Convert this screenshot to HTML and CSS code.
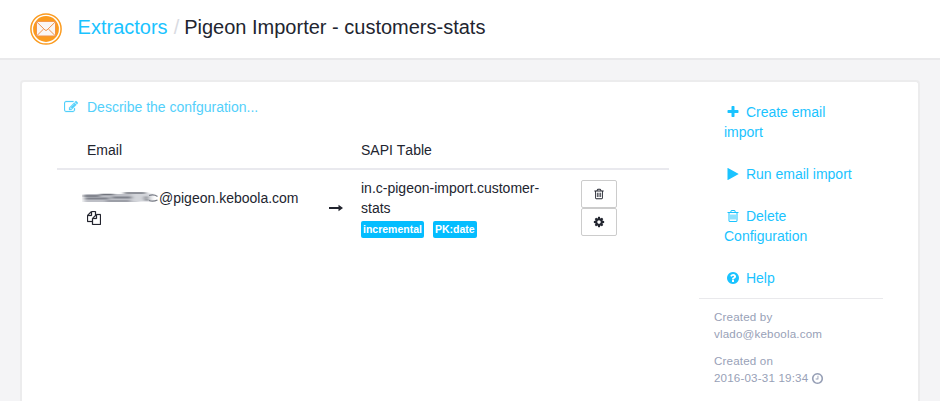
FILE: index.html
```html
<!DOCTYPE html>
<html lang="en">
<head>
<meta charset="utf-8">
<title>Pigeon Importer - customers-stats</title>
<link rel="stylesheet" href="styles.css">
</head>
<body>
<svg class="sprite" aria-hidden="true">
  <symbol id="edit" viewBox="0 0 1792 1792"><path d="M888 1184l116-116-152-152-116 116v56h96v96h56zm440-720q-16-16-33 1l-350 350q-17 17-1 33t33-1l350-350q17-17 1-33zm80 594v190q0 119-84.5 203.5t-203.5 84.5h-832q-119 0-203.5-84.5t-84.5-203.5v-832q0-119 84.5-203.5t203.5-84.5h832q63 0 117 25 15 7 18 23 3 17-9 29l-49 49q-14 14-32 8-23-6-45-6h-832q-66 0-113 47t-47 113v832q0 66 47 113t113 47h832q66 0 113-47t47-113v-126q0-13 9-22l64-64q15-15 35-7t20 29zm-96-738l288 288-672 672h-288v-288zm444 132l-92 92-288-288 92-92q28-28 68-28t68 28l152 152q28 28 28 68t-28 68z"/></symbol>
  <symbol id="copy" viewBox="0 0 1792 1792"><path d="M1696 384q40 0 68 28t28 68v1216q0 40-28 68t-68 28h-960q-40 0-68-28t-28-68v-288h-544q-40 0-68-28t-28-68v-672q0-40 20-88t48-76l408-408q28-28 76-48t88-20h416q40 0 68 28t28 68v328q68-40 128-40h416zm-544 213l-299 299h299v-299zm-640-384l-299 299h299v-299zm196 647l316-316v-416h-384v416q0 40-28 68t-68 28h-416v640h512v-256q0-40 20-88t48-76zm956 804v-1152h-384v416q0 40-28 68t-68 28h-416v640h896z"/></symbol>
  <symbol id="trash" viewBox="0 0 1792 1792"><path d="M704 736v576q0 14-9 23t-23 9h-64q-14 0-23-9t-9-23v-576q0-14 9-23t23-9h64q14 0 23 9t9 23zm256 0v576q0 14-9 23t-23 9h-64q-14 0-23-9t-9-23v-576q0-14 9-23t23-9h64q14 0 23 9t9 23zm256 0v576q0 14-9 23t-23 9h-64q-14 0-23-9t-9-23v-576q0-14 9-23t23-9h64q14 0 23 9t9 23zm128 724v-948h-896v948q0 22 7 40.5t14.5 27 10.5 8.5h832q3 0 10.5-8.5t14.5-27 7-40.5zm-672-1076h448l-48-117q-7-9-17-11h-317q-10 2-17 11zm928 32v64q0 14-9 23t-23 9h-96v948q0 83-47 143.5t-113 60.5h-832q-66 0-113-58.5t-47-141.5v-952h-96q-14 0-23-9t-9-23v-64q0-14 9-23t23-9h309l70-167q15-37 54-63t79-26h320q40 0 79 26t54 63l70 167h309q14 0 23 9t9 23z"/></symbol>
  <symbol id="cog" viewBox="0 0 1792 1792"><path d="M1152 896q0-106-75-181t-181-75-181 75-75 181 75 181 181 75 181-75 75-181zm512-109v222q0 12-8 23t-20 13l-185 28q-19 54-39 91 35 50 107 138 10 12 10 25t-9 23q-27 37-99 108t-94 71q-12 0-26-9l-138-108q-44 23-91 38-16 136-29 186-7 28-36 28h-222q-14 0-24.5-8.5t-11.5-21.5l-28-184q-49-16-90-37l-141 107q-10 9-25 9-14 0-25-11-126-114-165-168-7-10-7-23 0-12 8-23 15-21 51-66.5t54-70.5q-27-50-41-99l-183-27q-13-2-21-12.5t-8-23.5v-222q0-12 8-23t19-13l186-28q14-46 39-92-40-57-107-138-10-12-10-24 0-10 9-23 26-36 98.5-107.5t94.5-71.5q13 0 26 10l138 107q44-23 91-38 16-136 29-186 7-28 36-28h222q14 0 24.5 8.5t11.5 21.5l28 184q49 16 90 37l142-107q9-9 24-9 13 0 25 10 129 119 165 170 7 8 7 22 0 12-8 23-15 21-51 66.5t-54 70.5q26 50 41 98l183 28q13 2 21 12.5t8 23.5z"/></symbol>
  <symbol id="plus" viewBox="0 0 1792 1792"><path d="M1600 736v192q0 40-28 68t-68 28h-416v416q0 40-28 68t-68 28h-192q-40 0-68-28t-28-68v-416h-416q-40 0-68-28t-28-68v-192q0-40 28-68t68-28h416v-416q0-40 28-68t68-28h192q40 0 68 28t28 68v416h416q40 0 68 28t28 68z"/></symbol>
  <symbol id="play" viewBox="0 0 1792 1792"><path d="M1576 927l-1328 738q-23 13-39.5 3t-16.500-36v-1472q0-26 16.500-36t39.500 3l1328 738q23 13 23 31t-23 31z"/></symbol>
  <symbol id="help" viewBox="0 0 1792 1792"><path d="M1024 1376v-192q0-14-9-23t-23-9h-192q-14 0-23 9t-9 23v192q0 14 9 23t23 9h192q14 0 23-9t9-23zm256-672q0-88-55.500-163t-138.500-116-170-41q-243 0-371 213-15 24 8 42l132 100q7 6 19 6 16 0 25-12 53-68 86-92 34-24 86-24 48 0 85.500 26t37.500 59q0 38-20 61t-68 45q-63 28-115.500 86.500t-52.500 125.500v36q0 14 9 23t23 9h192q14 0 23-9t9-23q0-19 21.500-49.500t54.500-49.500q32-18 49-28.500t46-35 44.500-48 28-60.500 12.500-81zm384 192q0 209-103 385.500t-279.500 279.500-385.500 103-385.500-103-279.500-279.500-103-385.500 103-385.500 279.500-279.500 385.500-103 385.500 103 279.500 279.500 103 385.500z"/></symbol>
  <symbol id="clock" viewBox="0 0 1792 1792"><path d="M1024 544v448q0 14-9 23t-23 9h-320q-14 0-23-9t-9-23v-64q0-14 9-23t23-9h224v-352q0-14 9-23t23-9h64q14 0 23 9t9 23zm416 352q0-148-73-273t-198-198-273-73-273 73-198 198-73 273 73 273 198 198 273 73 273-73 198-198 73-273zm224 0q0 209-103 385.500t-279.500 279.500-385.500 103-385.500-103-279.500-279.500-103-385.500 103-385.500 279.500-279.500 385.500-103 385.500 103 279.500 279.500 103 385.500z"/></symbol>
</svg>

<header class="topbar">
  <svg class="logo" viewBox="0 0 32 32">
    <circle cx="16" cy="16" r="15.100" fill="#fff" stroke="#fb9b1f" stroke-width="1.500"/>
    <circle cx="16" cy="16" r="12.900" fill="#fb9b1f"/>
    <g fill="#faf6f4" stroke="#f0934c" stroke-width="1">
      <rect x="6.500" y="8.700" width="19" height="14.300" rx="1"/>
      <path d="M7 22.500l6.600-6.500M25 22.500L18.400 16" fill="none"/>
      <path d="M6.800 9l8.200 8q1 .9 2 0l8.200-8"/>
    </g>
  </svg>
  <h1 class="title"><a class="link" href="#">Extractors</a><span class="slash">/</span>Pigeon Importer - customers-stats</h1>
</header>

<main class="card">
  <section class="content">
    <a class="describe" href="#"><svg class="icon"><use href="#edit"/></svg><span>Describe the confguration...</span></a>
    <div class="row head">
      <div class="email-head">Email</div>
      <div></div>
      <div>SAPI Table</div>
      <div></div>
    </div>
    <div class="row">
      <div class="email">
        <div class="address">
          <svg class="smudge" viewBox="0 0 77 14">
            <defs><filter id="soft" x="-10%" y="-40%" width="120%" height="180%"><feGaussianBlur stdDeviation="2.200 .7"/></filter></defs>
            <g filter="url(#soft)" fill="none">
              <path d="M2 7H56" stroke="#bdbfc6" stroke-width="8"/>
              <path d="M50 6.500H70" stroke="#d3d5da" stroke-width="8"/>
              <path d="M1 5h17M18 3.500h14M42 2h22" stroke="#6f737c" stroke-width="1.500"/>
              <path d="M3 7.500h24M30 6.500h20" stroke="#80838c" stroke-width="1.800"/>
              <path d="M24 10h24" stroke="#92959d" stroke-width="1.500"/>
              <path d="M65 5.500q-3 2 1 4" stroke="#5d616b" stroke-width="2.500"/>
            </g>
            <path d="M67 4.500q5-1.500 8.500 1M67 9.500q4 1.500 8.500-.5" fill="none" stroke="#777b85" stroke-width="1.300"/>
          </svg><span>@pigeon.keboola.com</span>
        </div>
        <svg class="icon copy"><use href="#copy"/></svg>
      </div>
      <div class="arrow"><svg viewBox="0 0 14 8"><path d="M0 3h9.500V.7L14 4 9.500 7.300V5H0z"/></svg></div>
      <div class="table-name">in.c-pigeon-import.customer-stats
        <div class="labels"><span class="label incremental">incremental</span><span class="label">PK:date</span></div>
      </div>
      <div class="buttons">
        <button class="btn" aria-label="Delete"><svg class="icon"><use href="#trash"/></svg></button>
        <button class="btn" aria-label="Settings"><svg class="icon"><use href="#cog"/></svg></button>
      </div>
    </div>
  </section>
  <aside class="side">
    <nav class="actions">
      <a href="#"><svg class="icon"><use href="#plus"/></svg> Create email import</a>
      <a href="#"><svg class="icon"><use href="#play"/></svg> Run email import</a>
      <a href="#"><svg class="icon"><use href="#trash"/></svg> Delete Configuration</a>
      <a href="#"><svg class="icon"><use href="#help"/></svg> Help</a>
    </nav>
    <div class="meta">
      <p>Created by<br>vlado@keboola.com</p>
      <p>Created on<br>2016-03-31 19:34 <svg class="icon"><use href="#clock"/></svg></p>
    </div>
  </aside>
</main>
</body>
</html>
```
FILE: styles.css
```css
* { box-sizing: border-box; }
body {
  display: flex;
  flex-direction: column;
  margin: 0;
  height: 401px;
  background: #f4f4f6;
  color: #22252f;
  font: 14px/20px "Liberation Sans", Arial, sans-serif;
  font-kerning: none;
}
a { color: #1ac3ff; text-decoration: none; }
.sprite { display: none; }
.icon { width: 14px; height: 14px; fill: currentColor; }

.topbar {
  display: flex;
  flex: none;
  align-items: flex-start;
  height: 60px;
  padding: 13px 0 0 30px;
  background: #fff;
  border-bottom: 2px solid #e9e9eb;
}
.logo { width: 32px; height: 32px; }
.title { margin: 0 0 0 15.6px; font-size: 20px; font-weight: 400; line-height: 28px; }
.slash { padding: 0 5px 0 6px; color: #d9dbe2; }

.card {
  display: flex;
  flex: 1;
  margin: 20px 20px 0;
  background: #fff;
  border: 2px solid #ececed;
  border-bottom: 0;
  border-radius: 4px 4px 0 0;
}
.content { width: 647px; padding: 15px 0 0 35px; }
.describe { display: flex; align-items: center; gap: 9px; margin-left: 7px; color: #53d0fb; }
.describe .icon, .copy { stroke: currentColor; stroke-width: 30px; }
.row { display: grid; grid-template-columns: 272px 32px 220px 88px; }
.head { margin-top: 13px; height: 40px; padding-top: 10px; border-bottom: 2px solid #e9e9ee; }
.email-head { padding-left: 30px; }
.head + .row { padding-top: 10px; }
.email { padding: 8px 0 0 25px; }
.address { display: flex; }
.smudge { width: 77px; height: 14px; margin-top: 3px; }
.copy { display: block; margin: 3px 0 0 5px; }
.arrow { padding-top: 24px; }
.arrow svg { display: block; width: 14px; height: 8px; fill: #22252f; }
.table-name { width: 190px; margin-top: -2px; }
.labels { display: flex; gap: 9px; margin-top: 3px; }
.label {
  height: 17px;
  padding: 0 2px;
  border-radius: 2px;
  background: #04bdff;
  color: #fff;
  font-size: 10.5px;
  font-weight: 700;
  line-height: 17px;
}
.incremental { width: 63px; }
.buttons { width: 36px; }
.btn {
  display: flex;
  align-items: center;
  justify-content: center;
  width: 36px;
  height: 28px;
  padding: 0;
  background: #fff;
  border: 1px solid #ccc;
  border-radius: 2px;
  color: #22252f;
}
.btn .icon { width: 12px; height: 12px; }

.side { width: 214px; padding: 20px 0 0 31px; }
.actions { padding: 0 20px 10px 24px; }
.actions a { display: block; margin-bottom: 22px; }
.actions a:last-child { margin-bottom: 0; }
.actions .icon { margin: 0 2px; vertical-align: -2px; }
.meta {
  width: 184px;
  margin-left: -1px;
  padding: 9px 0 0 15px;
  border-top: 1px solid #e9e9ec;
  color: #98a1b7;
  font-size: 11.6px;
  letter-spacing: .17px;
  line-height: 17px;
}
.meta p { margin: 0 0 10px; }
.meta .icon { width: 13px; height: 13px; margin-left: -1px; vertical-align: -3px; }
```
